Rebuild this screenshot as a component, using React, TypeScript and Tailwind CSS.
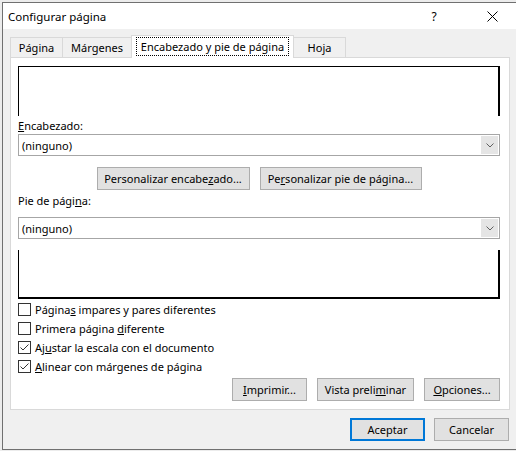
import type { ReactNode } from "react";

// Windows "Configurar página" dialog, Encabezado y pie de página tab.

function Button({ w, children, isDefault = false }: { w: string; children: ReactNode; isDefault?: boolean }) {
  return (
    <div
      className={`${w} flex h-[23px] items-center justify-center bg-[#e1e1e1] text-black ${
        isDefault ? "border-2 border-[#0078d7]" : "border border-[#adadad]"
      }`}
    >
      {children}
    </div>
  );
}

function Combo({ value }: { value: string }) {
  return (
    <div className="flex h-[22px] items-center border border-[#a6a6a6] bg-white">
      <span className="flex-1 pl-[3px]">{value}</span>
      <span className="mr-px flex h-[18px] w-[17px] items-center justify-center bg-[#e5e5e5]">
        <svg width="8" height="5" viewBox="0 0 8 5">
          <path d="M0.5 0.5 L4 4 L7.5 0.5" fill="none" stroke="#606060" />
        </svg>
      </span>
    </div>
  );
}

function Check({ checked = false, children }: { checked?: boolean; children: ReactNode }) {
  return (
    <div className="flex h-[19px] items-center">
      <span className="flex h-[13px] w-[13px] items-center justify-center border border-[#333333] bg-white">
        {checked && (
          <svg width="11" height="11" viewBox="0 0 11 11">
            <path d="M1.5 5.5 L4 8 L9.5 2.5" fill="none" stroke="#333333" strokeWidth="1" />
          </svg>
        )}
      </span>
      <span className="ml-[4px]">{children}</span>
    </div>
  );
}

export default function App() {
  return (
    <div className="h-[451px] w-[516px] overflow-hidden bg-[#ececec] pl-[2px] pt-[2px] font-['Noto_Sans',sans-serif] text-[11px] leading-[15px] whitespace-nowrap text-black">
      <div className="flex h-[448px] w-[520px] flex-col border border-[#707070] bg-[#f0f0f0]">
        {/* title bar */}
        <div className="flex h-[26px] items-center bg-white pl-[5px] pr-[19px]">
          <span className="text-[11.5px]">Configurar página</span>
          <span className="ml-auto flex w-[20px] justify-center text-[12px]">?</span>
          <span className="ml-[38px] flex w-[20px] justify-center">
            <svg width="11" height="11" viewBox="0 0 11 11">
              <path d="M0.5 0.5 L10.5 10.5 M10.5 0.5 L0.5 10.5" stroke="#000" strokeWidth="1" />
            </svg>
          </span>
        </div>

        <div className="flex flex-col pl-[7px] pt-[6px]">
          {/* tabs */}
          <div className="flex h-[22px] items-end">
            <div className="flex h-[20px] w-[53px] items-center justify-center border-x border-t border-[#d9d9d9] bg-[#f0f0f0]">
              Página
            </div>
            <div className="-ml-px flex h-[20px] w-[70px] items-center justify-center border-x border-t border-[#d9d9d9] bg-[#f0f0f0]">
              Márgenes
            </div>
            <div className="relative z-10 -mb-px -ml-px flex h-[23px] w-[163px] items-start justify-center border-x border-t border-[#d9d9d9] bg-white pt-[1px]">
              <span className="flex h-[19px] items-center border border-dotted border-black px-[4px]">
                Encabezado y pie de página
              </span>
            </div>
            <div className="-ml-px flex h-[20px] w-[53px] items-center justify-center border-x border-t border-[#d9d9d9] bg-[#f0f0f0]">
              Hoja
            </div>
          </div>

          {/* tab panel */}
          <div className="flex w-[500px] flex-col border border-[#d9d9d9] bg-white pb-[8px] pl-[7px] pr-[9px] pt-[8px]">
            <div className="h-[50px] border-l border-r-2 border-t border-black" />

            <div className="flex h-[18px] items-center">
              <span>
                <u>E</u>ncabezado:
              </span>
            </div>
            <Combo value="(ninguno)" />

            <div className="mt-[11px] flex justify-center gap-[10px]">
              <Button w="w-[153px]">
                <span>
                  Personalizar encabe<u>z</u>ado...
                </span>
              </Button>
              <Button w="w-[162px]">
                <span>
                  Pe<u>r</u>sonalizar pie de página...
                </span>
              </Button>
            </div>

            <div className="mt-px flex h-[18px] items-center">
              <span>
                Pie de pági<u>n</u>a:
              </span>
            </div>
            <div className="mt-[8px]">
              <Combo value="(ninguno)" />
            </div>

            <div className="mt-[11px] h-[49px] border-b-2 border-l border-r-2 border-black" />

            <div className="mt-px flex flex-col">
              <Check>
                Página<u>s</u> impares y pares diferentes
              </Check>
              <Check>
                Primera página <u>d</u>iferente
              </Check>
              <Check checked>
                Aj<u>u</u>star la escala con el documento
              </Check>
              <Check checked>
                <u>A</u>linear con márgenes de página
              </Check>
            </div>

            <div className="mt-[2px] flex justify-end gap-[10px]">
              <Button w="w-[75px]">
                <span>
                  <u>I</u>mprimir...
                </span>
              </Button>
              <Button w="w-[97px]">
                <span>
                  Vista preli<u>m</u>inar
                </span>
              </Button>
              <Button w="w-[76px]">
                <span>
                  <u>O</u>pciones...
                </span>
              </Button>
            </div>
          </div>

          {/* dialog buttons */}
          <div className="mt-[8px] flex w-[500px] justify-end gap-[9px] pr-px">
            <Button w="w-[75px]" isDefault>
              Aceptar
            </Button>
            <Button w="w-[75px]">Cancelar</Button>
          </div>
        </div>
      </div>
    </div>
  );
}
